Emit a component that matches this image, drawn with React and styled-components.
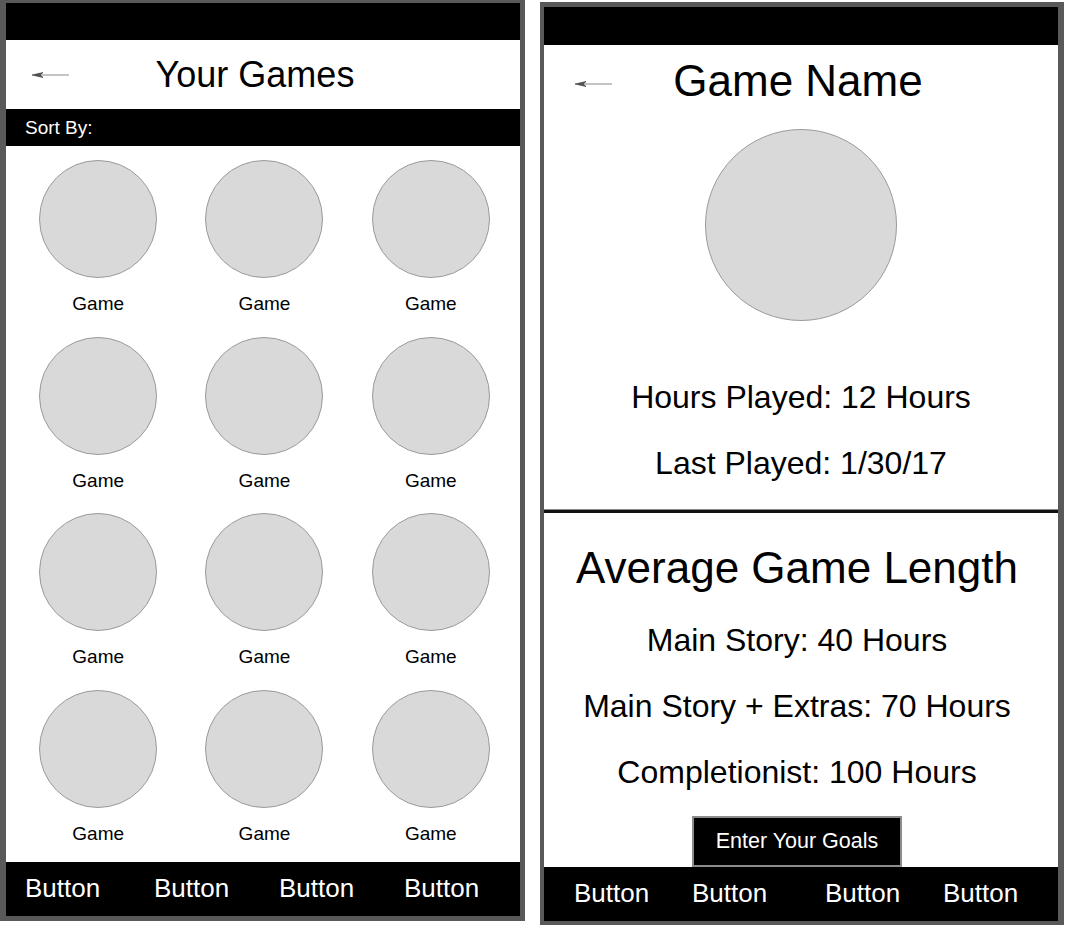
import React from "react";
import styled, { createGlobalStyle } from "styled-components";

const Global = createGlobalStyle`
  html, body { margin: 0; padding: 0; background: #ffffff; }
  body { font-family: "Liberation Sans", Arial, sans-serif; }
  * { box-sizing: border-box; }
`;

const Page = styled.div`
  display: flex;
  align-items: flex-start;
  width: 1066px;
  height: 928px;
  overflow: hidden;
`;

const Phone = styled.div`
  display: flex;
  flex-direction: column;
  width: ${(p) => p.$w}px;
  height: ${(p) => p.$h}px;
  margin: ${(p) => p.$margin || "0"};
  border-style: solid;
  border-color: #595959;
  border-width: ${(p) => p.$border};
  background: #ffffff;
  flex-shrink: 0;
`;

const StatusBar = styled.div`
  height: ${(p) => p.$h}px;
  background: #000;
  flex-shrink: 0;
`;

const Header = styled.div`
  display: grid;
  grid-template-columns: 1fr auto 1fr;
  align-items: center;
  height: ${(p) => p.$h}px;
  flex-shrink: 0;
`;

const BackWrap = styled.div`
  padding-left: ${(p) => p.$left}px;
  padding-top: ${(p) => p.$top || 0}px;
  display: flex;
  align-items: center;
`;

const Title = styled.h1`
  margin: 0 ${(p) => p.$shift || 0}px 0 0;
  font-weight: normal;
  font-size: ${(p) => p.$size}px;
  line-height: 1.15;
  color: #000;
  white-space: nowrap;
`;

const SortBar = styled.div`
  height: 37px;
  background: #000;
  color: #fff;
  font-size: 19px;
  display: flex;
  align-items: center;
  padding-left: 19px;
  flex-shrink: 0;
`;

const Grid = styled.div`
  display: grid;
  grid-template-columns: repeat(3, 1fr);
  row-gap: 21.5px;
  padding: 14px 6px 0 9px;
  align-content: start;
  flex: 1;
`;

const Tile = styled.div`
  display: flex;
  flex-direction: column;
  align-items: center;
`;

const Circle = styled.div`
  width: ${(p) => p.$d}px;
  height: ${(p) => p.$d}px;
  border-radius: 50%;
  background: #d9d9d9;
  border: 1px solid #9a9a9a;
  flex-shrink: 0;
`;

const TileLabel = styled.div`
  margin-top: 15px;
  font-size: 19px;
  line-height: 22px;
  color: #000;
`;

const BottomBar = styled.div`
  display: grid;
  grid-template-columns: ${(p) => p.$cols};
  align-items: center;
  height: 54px;
  padding-left: ${(p) => p.$left}px;
  padding-bottom: ${(p) => p.$lift || 0}px;
  background: #000;
  margin-top: auto;
  flex-shrink: 0;
`;

const BarButton = styled.span`
  color: #fff;
  font-size: 26px;
  line-height: 30px;
  white-space: nowrap;
`;

const Detail = styled.div`
  display: flex;
  flex-direction: column;
  align-items: center;
`;

const LengthSection = styled.section`
  display: flex;
  flex-direction: column;
  align-items: center;
  padding-right: 8px;
`;

const Cover = styled(Circle)`
  margin-top: 12px;
`;

const Stat = styled.div`
  font-size: 32px;
  line-height: 66px;
  color: #000;
  text-align: center;
  white-space: nowrap;
  margin-top: ${(p) => p.$mt || 0}px;
`;

const Divider = styled.hr`
  width: 100%;
  margin: 14px 0 0;
  border: none;
  height: 3px;
  background: #111;
  box-shadow: 0 -1px 0 #8a8a8a;
`;

const SectionTitle = styled.h2`
  margin: 25px 0 9px;
  font-weight: normal;
  font-size: 44px;
  line-height: 60px;
  color: #000;
  text-align: center;
  white-space: nowrap;
`;

const GoalButton = styled.button`
  margin-top: 11px;
  width: 210px;
  height: 51px;
  background: #000;
  color: #fff;
  border: 2px solid #8c8c8c;
  font-family: "Liberation Sans", Arial, sans-serif;
  font-size: 21.5px;
  padding: 0;
  cursor: pointer;
`;

const BackArrow = () => (
  <svg width="38" height="8" viewBox="0 0 38 8">
    <line x1="6" y1="4" x2="37" y2="4" stroke="#8a8a8a" strokeWidth="1" />
    <path d="M0 4 L11 1.5 L8 4 L11 6.5 Z" fill="#555" stroke="#333" strokeWidth="0.6" />
  </svg>
);

const games = Array.from({ length: 12 }, (_, i) => i);
const buttons = ["Button", "Button", "Button", "Button"];

export default function App() {
  return (
    <>
      <Global />
      <Page>
        <Phone $w={525} $h={921} $border="3px 5px 5px 6px">
          <StatusBar $h={37} />
          <Header $h={69}>
            <BackWrap $left={26}>
              <BackArrow />
            </BackWrap>
            <Title $size={36} $shift={16}>Your Games</Title>
            <div />
          </Header>
          <SortBar>Sort By:</SortBar>
          <Grid>
            {games.map((g) => (
              <Tile key={g}>
                <Circle $d={118} />
                <TileLabel>Game</TileLabel>
              </Tile>
            ))}
          </Grid>
          <BottomBar $left={19} $lift={3} $cols="129px 125px 125px auto">
            {buttons.map((b, i) => (
              <BarButton key={i}>{b}</BarButton>
            ))}
          </BottomBar>
        </Phone>

        <Phone $w={524} $h={923} $margin="2px 0 0 15px" $border="5px 6px 4px 4px">
          <StatusBar $h={38} />
          <Header $h={72}>
            <BackWrap $left={31} $top={6}>
              <BackArrow />
            </BackWrap>
            <Title $size={44} $shift={6}>Game Name</Title>
            <div />
          </Header>
          <Detail>
            <Cover $d={192} />
            <Stat $mt={43}>Hours Played: 12 Hours</Stat>
            <Stat>Last Played: 1/30/17</Stat>
            <Divider />
          </Detail>
          <LengthSection>
            <SectionTitle>Average Game Length</SectionTitle>
            <Stat>Main Story: 40 Hours</Stat>
            <Stat>Main Story + Extras: 70 Hours</Stat>
            <Stat>Completionist: 100 Hours</Stat>
            <GoalButton>Enter Your Goals</GoalButton>
          </LengthSection>
          <BottomBar $left={30} $lift={3} $cols="118px 133px 118px auto">
            {buttons.map((b, i) => (
              <BarButton key={i}>{b}</BarButton>
            ))}
          </BottomBar>
        </Phone>
      </Page>
    </>
  );
}
